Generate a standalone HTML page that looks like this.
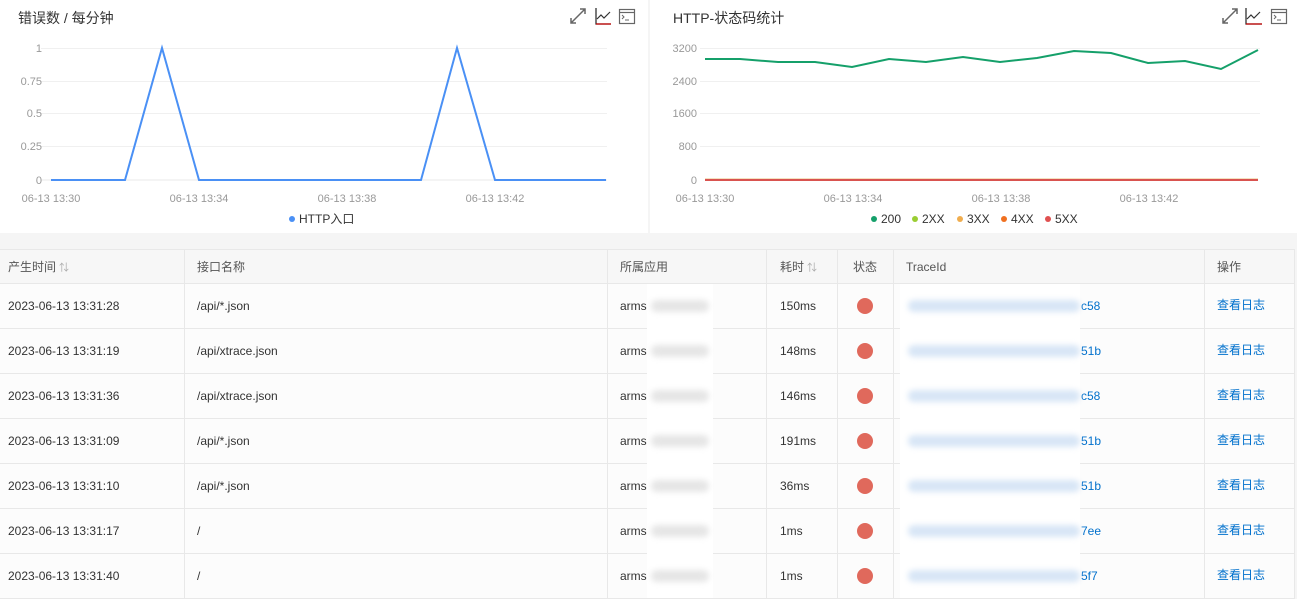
<!DOCTYPE html>
<html><head><meta charset="utf-8"><style>
*{margin:0;padding:0;box-sizing:border-box}
body{width:1297px;height:598px;overflow:hidden;background:#f5f5f5;font-family:"Liberation Sans","Noto Sans CJK SC",sans-serif;color:#333;position:relative}
.panel{position:absolute;top:0;height:233px;background:#fff}
.t{position:absolute;font-size:14px;color:#333}
.row{position:absolute;left:0;width:1295px;height:45px;background:#fcfcfc;border-bottom:1px solid #e8e8e8;font-size:12px;color:#333}
.hdr{background:#f7f7f7;height:35px;top:249px;border-top:1px solid #e8e8e8;color:#555}
.c{position:absolute;top:0;height:100%;display:flex;align-items:center;border-right:1px solid #e8e8e8;padding-left:8px}
.dot{width:16px;height:16px;border-radius:50%;background:#e0695c;margin-left:11px}
.blurA{position:absolute;left:647px;top:284px;width:66px;height:314px;background:#fff}
.blurA i,.blurB i{position:absolute;height:12px;border-radius:6px;filter:blur(3px)}
.blurB{position:absolute;left:900px;top:284px;width:180px;height:314px;background:#fff}
.lnk{color:#0070cc}
.op{margin-top:-3px}
</style></head><body>
<div class="panel" style="left:0;width:648px">
<div class="t" style="left:18px;top:8px">错误数 / 每分钟</div>
</div>
<div class="panel" style="left:650px;width:647px">
<div class="t" style="left:23px;top:8px">HTTP-状态码统计</div>
</div>
<svg width="1297" height="233" style="position:absolute;left:0;top:0">
<g stroke="#f0f0f0" stroke-width="1">
<line x1="41" y1="48.5" x2="607" y2="48.5"/><line x1="41" y1="81.5" x2="607" y2="81.5"/><line x1="41" y1="113.5" x2="607" y2="113.5"/><line x1="41" y1="146.5" x2="607" y2="146.5"/>
<line x1="700" y1="48.5" x2="1260" y2="48.5"/><line x1="700" y1="81.5" x2="1260" y2="81.5"/><line x1="700" y1="113.5" x2="1260" y2="113.5"/><line x1="700" y1="146.5" x2="1260" y2="146.5"/>
</g>
<line x1="41" y1="180" x2="607" y2="180" stroke="#e8e8e8"/>
<polyline fill="none" stroke="#4a90f5" stroke-width="2" points="51,180 125,180 162,48 199,180 421,180 457,48 495,180 606,180"/>
<polyline fill="none" stroke="#e8c080" stroke-width="1" points="705,179 1258,179"/>
<polyline fill="none" stroke="#d9534f" stroke-width="2" points="705,180 1258,180"/>
<polyline fill="none" stroke="#15a06a" stroke-width="2" points="705,59 740,59 778,62 815,62 852,67 889,59 926,62 963,57 1000,62 1037,58 1074,51 1111,53 1148,63 1185,61 1221,69 1258,50"/>
<g stroke="#666" stroke-width="1.5" fill="none">
<path d="M571,23 L585,9 M580,9 L585,9 L585,14 M571,18 L571,23 L576,23"/>
<path d="M1223,23 L1237,9 M1232,9 L1237,9 L1237,14 M1223,18 L1223,23 L1228,23"/>
<path d="M597,19 L601,15 L604,18 L610,12" stroke="#333" stroke-width="1.2"/>
<path d="M1247,19 L1251,15 L1254,18 L1260,12" stroke="#333" stroke-width="1.2"/>
<rect x="619.5" y="9.5" width="15" height="14" stroke-width="1.2"/><line x1="620" y1="12.5" x2="634" y2="12.5" stroke-width="1.2"/>
<rect x="1271.5" y="9.5" width="15" height="14" stroke-width="1.2"/><line x1="1272" y1="12.5" x2="1286" y2="12.5" stroke-width="1.2"/>
<path d="M622,15 L624,17 L622,19 M625,20 L629,20" stroke-width="1"/>
<path d="M1274,15 L1276,17 L1274,19 M1277,20 L1281,20" stroke-width="1"/>
</g>
<g stroke="#222" stroke-width="1.2" fill="none"><path d="M596,8 L596,24 L611,24"/><path d="M1246,8 L1246,24 L1262,24"/></g>
<g stroke="#c00" stroke-width="1.2"><line x1="596" y1="24" x2="611" y2="24"/><line x1="1246" y1="24" x2="1262" y2="24"/></g>
<g font-size="11" fill="#999" font-family="Liberation Sans,sans-serif" text-anchor="end">
<text x="42" y="52">1</text><text x="42" y="85">0.75</text><text x="42" y="117">0.5</text><text x="42" y="150">0.25</text><text x="42" y="184">0</text>
<text x="697" y="52">3200</text><text x="697" y="85">2400</text><text x="697" y="117">1600</text><text x="697" y="150">800</text><text x="697" y="184">0</text>
</g>
<g font-size="11" fill="#999" font-family="Liberation Sans,sans-serif" text-anchor="middle">
<text x="51" y="202">06-13 13:30</text><text x="199" y="202">06-13 13:34</text><text x="347" y="202">06-13 13:38</text><text x="495" y="202">06-13 13:42</text>
<text x="705" y="202">06-13 13:30</text><text x="853" y="202">06-13 13:34</text><text x="1001" y="202">06-13 13:38</text><text x="1149" y="202">06-13 13:42</text>
</g>
<g font-size="12" fill="#333" font-family="Liberation Sans,Noto Sans CJK SC,sans-serif">
<circle cx="292" cy="219" r="3" fill="#4a90f5"/><text x="299" y="223">HTTP入口</text>
<circle cx="874" cy="219" r="3" fill="#15a06a"/><text x="881" y="223">200</text>
<circle cx="915" cy="219" r="3" fill="#9acd32"/><text x="922" y="223">2XX</text>
<circle cx="960" cy="219" r="3" fill="#f0ad4e"/><text x="967" y="223">3XX</text>
<circle cx="1004" cy="219" r="3" fill="#f07020"/><text x="1011" y="223">4XX</text>
<circle cx="1048" cy="219" r="3" fill="#e05050"/><text x="1055" y="223">5XX</text>
</g>
</svg>

<div class="row hdr">
<div class="c" style="left:0;width:185px">产生时间 <span style="color:#aaa;font-size:10px;margin-left:3px">⇅</span></div>
<div class="c" style="left:185px;width:423px;padding-left:12px">接口名称</div>
<div class="c" style="left:608px;width:159px;padding-left:12px">所属应用</div>
<div class="c" style="left:767px;width:71px;padding-left:13px">耗时 <span style="color:#aaa;font-size:10px;margin-left:3px">⇅</span></div>
<div class="c" style="left:838px;width:56px;padding-left:15px">状态</div>
<div class="c" style="left:894px;width:311px;padding-left:12px">TraceId</div>
<div class="c" style="left:1205px;width:90px;padding-left:12px">操作</div>
</div>

<div id="rows"></div>
<script>
var d=[["2023-06-13 13:31:28","/api/*.json","150ms","c58"],["2023-06-13 13:31:19","/api/xtrace.json","148ms","51b"],["2023-06-13 13:31:36","/api/xtrace.json","146ms","c58"],["2023-06-13 13:31:09","/api/*.json","191ms","51b"],["2023-06-13 13:31:10","/api/*.json","36ms","51b"],["2023-06-13 13:31:17","/","1ms","7ee"],["2023-06-13 13:31:40","/","1ms","5f7"]];
var h="";d.forEach(function(r,i){h+='<div class="row" style="top:'+(284+i*45)+'px">'+
'<div class="c" style="left:0;width:185px">'+r[0]+'</div>'+
'<div class="c" style="left:185px;width:423px;padding-left:12px">'+r[1]+'</div>'+
'<div class="c" style="left:608px;width:159px;padding-left:12px">arms</div>'+
'<div class="c" style="left:767px;width:71px;padding-left:13px">'+r[2]+'</div>'+
'<div class="c" style="left:838px;width:56px"><div class="dot"></div></div>'+
'<div class="c" style="left:894px;width:311px;padding-left:187px"><span class="lnk">'+r[3]+'</span></div>'+
'<div class="c" style="left:1205px;width:90px;padding-left:12px"><span class="lnk op">查看日志</span></div></div>';});
document.getElementById('rows').innerHTML=h;
var a="",b="";for(var i=0;i<7;i++){a+='<i style="left:4px;top:'+(16+i*45)+'px;width:58px;background:#e6e6e6"></i>';b+='<i style="left:8px;top:'+(16+i*45)+'px;width:172px;background:#d8e6f6"></i>';}
window.addEventListener('DOMContentLoaded',function(){document.querySelector('.blurA').innerHTML=a;document.querySelector('.blurB').innerHTML=b;});
</script>
<div class="blurA"></div>
<div class="blurB"></div>
</body></html>
